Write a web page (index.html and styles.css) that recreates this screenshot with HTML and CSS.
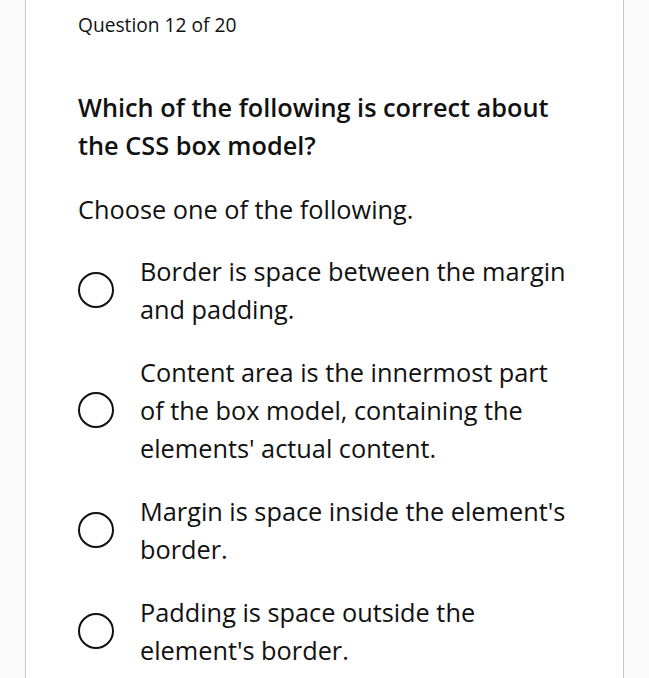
FILE: index.html
```html
<!DOCTYPE html>
<html>
<head>
<meta charset="utf-8">
<link rel="stylesheet" href="styles.css">
</head>
<body>
<div class="card">
  <div class="counter">Question 12 of 20</div>
  <h1 class="question">Which of the following is correct about the CSS box model?</h1>
  <p class="instruction">Choose one of the following.</p>
  <ul class="options">
    <li class="option"><span class="radio"></span><span class="label">Border is space between the margin and padding.</span></li>
    <li class="option"><span class="radio"></span><span class="label">Content area is the innermost part of the box model, containing the elements' actual content.</span></li>
    <li class="option"><span class="radio"></span><span class="label">Margin is space inside the element's border.</span></li>
    <li class="option"><span class="radio"></span><span class="label">Padding is space outside the element's border.</span></li>
  </ul>
</div>
</body>
</html>
```
FILE: styles.css
```css
html, body {
  margin: 0;
  padding: 0;
  background: #fafafa;
  font-family: "Open Sans", "Noto Sans", sans-serif;
  color: #111;
}
.card {
  margin-left: 25px;
  width: 599px;
  min-height: 678px;
  background: #fff;
  border-left: 1px solid #c8c8c8;
  border-right: 1px solid #c8c8c8;
  padding: 13px 0 0 52px;
  box-sizing: border-box;
}
.counter {
  font-size: 19.2px;
  line-height: 24px;
  font-weight: 500;
}
.question {
  margin: 51px 0 0;
  font-size: 25.3px;
  line-height: 38px;
  font-weight: 600;
  width: 495px;
}
.instruction {
  margin: 26px 0 0;
  font-size: 25.3px;
  line-height: 38px;
  font-weight: 400;
}
.options {
  list-style: none;
  margin: 24px 0 0;
  padding: 0;
  display: flex;
  flex-direction: column;
  gap: 25px;
}
.option {
  display: flex;
  align-items: center;
  gap: 26px;
}
.radio {
  flex: none;
  width: 36px;
  height: 36px;
  box-sizing: border-box;
  border: 2.5px solid #111;
  border-radius: 50%;
}
.label {
  font-size: 25.3px;
  line-height: 38px;
  width: 434px;
}
```
